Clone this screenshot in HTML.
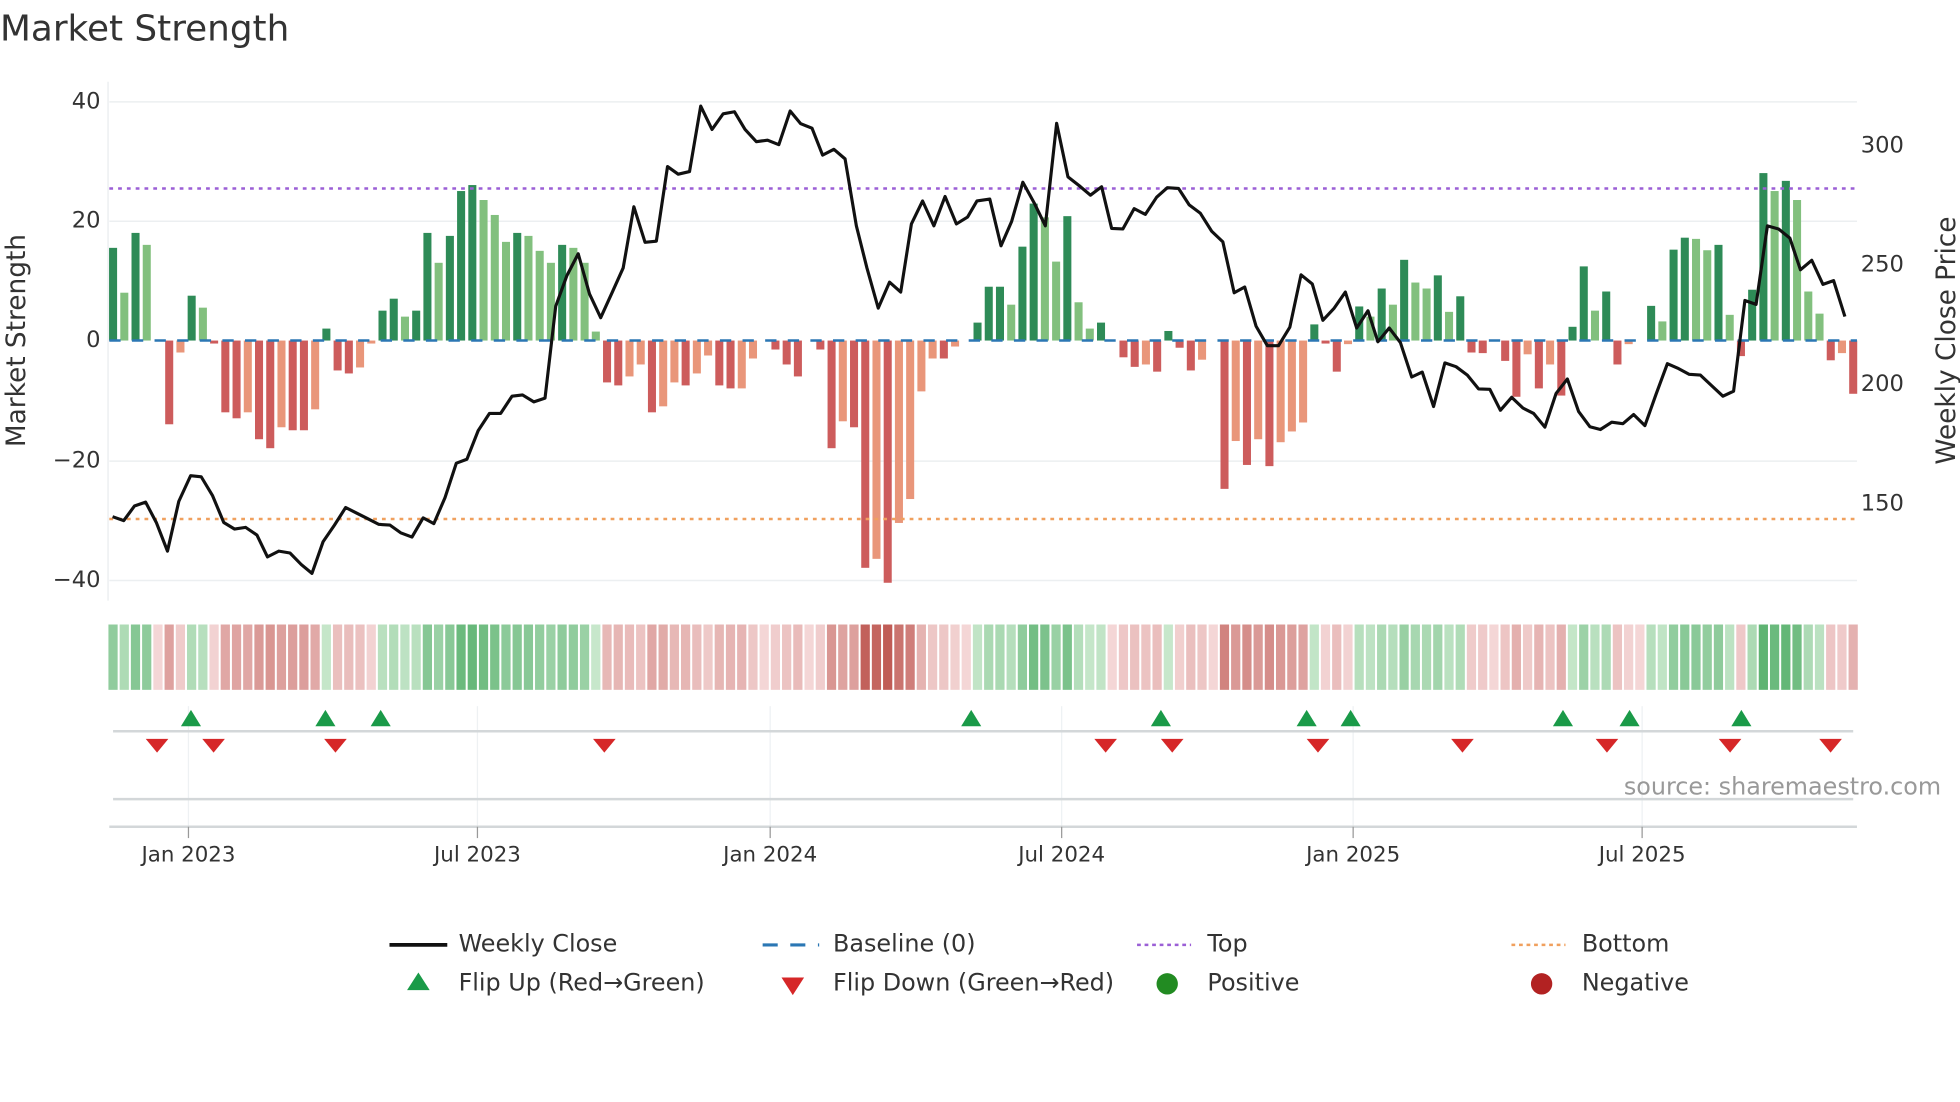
<!DOCTYPE html>
<html><head><meta charset="utf-8">
<style>
html,body{margin:0;padding:0;background:#fff;}
svg{display:block;font-family:"DejaVu Sans","Liberation Sans",sans-serif;}
</style></head>
<body>
<svg id="s" width="1960" height="1102" viewBox="0 0 1560 877" xmlns="http://www.w3.org/2000/svg">
<rect width="1560" height="877" fill="#fff"/>
<text x="0" y="32" font-size="28.5" fill="#333">Market Strength</text>
<g stroke="#eceff1" stroke-width="1.2">
<line x1="87" y1="81" x2="1478" y2="81"/>
<line x1="87" y1="176" x2="1478" y2="176"/>
<line x1="87" y1="367" x2="1478" y2="367"/>
<line x1="87" y1="462" x2="1478" y2="462"/>
<line x1="86" y1="65" x2="86" y2="478"/>
</g>
<g font-size="18" fill="#333" text-anchor="end" dominant-baseline="middle">
<text x="80" y="81">40</text><text x="80" y="176">20</text><text x="80" y="271">0</text>
<text x="80" y="367">−20</text><text x="80" y="462">−40</text>
</g>
<g font-size="18" fill="#333" dominant-baseline="middle">
<text x="1481" y="116">300</text><text x="1481" y="211">250</text><text x="1481" y="306">200</text><text x="1481" y="401">150</text>
</g>
<text transform="translate(20,271) rotate(-90)" font-size="21" fill="#333" text-anchor="middle">Market Strength</text>
<text transform="translate(1556,271) rotate(-90)" font-size="21" fill="#333" text-anchor="middle">Weekly Close Price</text>
<g id="bars"></g>
<line x1="87" y1="150" x2="1478" y2="150" stroke="#9b5fd6" stroke-width="2" stroke-dasharray="3,4"/>
<line x1="87" y1="413" x2="1478" y2="413" stroke="#f0a05e" stroke-width="2" stroke-dasharray="3,4"/>
<line x1="87" y1="271" x2="1478" y2="271" stroke="#2b77b4" stroke-width="2" stroke-dasharray="9,9"/>
<polyline id="pl" fill="none" stroke="#111" stroke-width="2.5" stroke-linejoin="round"/>
<g id="strip"></g>
<g stroke="#eef1f3" stroke-width="1">
<line x1="150" y1="562" x2="150" y2="658"/><line x1="380" y1="562" x2="380" y2="658"/>
<line x1="613" y1="562" x2="613" y2="658"/><line x1="845" y1="562" x2="845" y2="658"/>
<line x1="1077" y1="562" x2="1077" y2="658"/><line x1="1307" y1="562" x2="1307" y2="658"/>
</g>
<line x1="90" y1="582" x2="1475" y2="582" stroke="#d3d7d9" stroke-width="2"/>
<line x1="90" y1="636" x2="1475" y2="636" stroke="#d3d7d9" stroke-width="2"/>
<line x1="87" y1="658" x2="1478" y2="658" stroke="#d3d7d9" stroke-width="2"/>
<g stroke="#999" stroke-width="1">
<line x1="150" y1="658" x2="150" y2="667"/><line x1="380" y1="658" x2="380" y2="667"/>
<line x1="613" y1="658" x2="613" y2="667"/><line x1="845" y1="658" x2="845" y2="667"/>
<line x1="1077" y1="658" x2="1077" y2="667"/><line x1="1307" y1="658" x2="1307" y2="667"/>
</g>
<g id="mk"></g>
<g font-size="17" fill="#333" text-anchor="middle" dominant-baseline="middle">
<text x="150" y="681">Jan 2023</text><text x="380" y="681">Jul 2023</text><text x="613" y="681">Jan 2024</text>
<text x="845" y="681">Jul 2024</text><text x="1077" y="681">Jan 2025</text><text x="1307" y="681">Jul 2025</text>
</g>
<text x="1545" y="627" font-size="19" fill="#999" text-anchor="end" dominant-baseline="middle">source: sharemaestro.com</text>
<g font-size="19" fill="#333" dominant-baseline="middle">
<line x1="310" y1="752" x2="356" y2="752" stroke="#111" stroke-width="3"/>
<text x="365" y="752">Weekly Close</text>
<line x1="607" y1="752" x2="652" y2="752" stroke="#2b77b4" stroke-width="2.5" stroke-dasharray="12,10"/>
<text x="663" y="752">Baseline (0)</text>
<line x1="905" y1="752" x2="948" y2="752" stroke="#9b5fd6" stroke-width="2" stroke-dasharray="3,3"/>
<text x="961" y="752">Top</text>
<line x1="1203" y1="752" x2="1246" y2="752" stroke="#f0a05e" stroke-width="2" stroke-dasharray="3,3"/>
<text x="1259" y="752">Bottom</text>
<polygon points="324,788 342,788 333,774" fill="#1a9a48"/>
<text x="365" y="783">Flip Up (Red→Green)</text>
<polygon points="622,778 640,778 631,792" fill="#d62728"/>
<text x="663" y="783">Flip Down (Green→Red)</text>
<circle cx="929" cy="783" r="8.5" fill="#228b22"/>
<text x="961" y="783">Positive</text>
<circle cx="1227" cy="783" r="8.5" fill="#b22222"/>
<text x="1259" y="783">Negative</text>
</g>
</svg>
<script>
var V="15.5d,8l,18d,16l,0,-14d,-2l,7.5d,5.5l,-0.5d,-12d,-13d,-12l,-16.5d,-18d,-14.5l,-15d,-15d,-11.5l,2d,-5d,-5.5d,-4.5l,-0.5l,5d,7d,4l,5d,18d,13l,17.5d,25d,26d,23.5l,21l,16.5l,18d,17.5l,15l,13l,16d,15.5l,13l,1.5l,-7d,-7.5d,-6l,-4l,-12d,-11l,-7l,-7.5d,-5.5l,-2.5l,-7.5d,-8d,-8l,-3l,0,-1.5d,-4d,-6d,0,-1.5d,-18d,-13.5l,-14.5d,-38d,-36.5l,-40.5d,-30.5l,-26.5l,-8.5l,-3l,-3d,-1l,0,3d,9d,9d,6l,15.7d,22.9d,20.6l,13.2l,20.8d,6.4l,2l,3d,0,-2.8d,-4.4d,-4l,-5.2d,1.6d,-1.2d,-5d,-3.2l,0,-24.8d,-16.8l,-20.8d,-16.5l,-21d,-17l,-15.2l,-13.7l,2.7d,-0.5d,-5.2d,-0.6l,5.7d,4l,8.7d,6l,13.5d,9.7l,8.7l,10.9d,4.8l,7.4d,-2d,-2.1d,0,-3.4d,-9.4d,-2.3l,-8d,-4l,-9.2d,2.3d,12.4d,5l,8.2d,-4d,-0.6l,0,5.8d,3.2l,15.2d,17.2d,17l,15.1l,16d,4.3l,-2.6d,8.5d,28d,25l,26.7d,23.5l,8.2l,4.5l,-3.3d,-2.1l,-8.9d".split(",");
var NS="http://www.w3.org/2000/svg",n=V.length,sp=(1475-90)/(n-1),bars=document.getElementById("bars"),strip=document.getElementById("strip");
function el(p,t,a){var e=document.createElementNS(NS,t);for(var k in a)e.setAttribute(k,a[k]);p.appendChild(e);return e;}
function mix(a,b,t){return "rgb("+[0,1,2].map(function(i){return Math.round(a[i]+(b[i]-a[i])*t)}).join(",")+")";}
for(var i=0;i<n;i++){
 var s=V[i],v=parseFloat(s),k=s.slice(-1),x=90+sp*i;
 if(v!==0){
  var c=v>0?(k=="d"?"#2e8b57":"#82c07e"):(k=="d"?"#cd5c5c":"#e9967a");
  var y=271-v*4.76;
  el(bars,"rect",{x:x-3.2,y:Math.min(y,271),width:6.4,height:Math.abs(v*4.76),fill:c});
 }
 var col;
 if(v>0){var t=Math.min(v/28,1);col=mix([205,234,208],[95,180,115],t);}
 else{var t=Math.min(-v/40,1);col=mix([244,214,214],[192,92,86],Math.pow(t,0.8));}
 el(strip,"rect",{x:x-4.5+0.8,y:497,width:sp-1.6,height:52,fill:col});
}
var P1=[[180,1350],[198,1360],[215,1322],[233,1312],[250,1365],[268,1440],[286,1310],[305,1243],[322,1246],[340,1295],[358,1365],[375,1382],[393,1378],[411,1398],[428,1455],[446,1440],[464,1445],[482,1475],[499,1498],[517,1415],[535,1372],[553,1326],[570,1340],[588,1355],[606,1370],[624,1372],[641,1392],[659,1403],[677,1353],[694,1368],[712,1300],[730,1210],[747,1200],[765,1125],[783,1080],[801,1080],[819,1035],[836,1032],[854,1050],[872,1040],[889,800],[907,720],[925,663],[943,768],[961,830],[979,765],[997,700],[1014,540],[1032,633],[1050,630],[1068,435],[1085,455],[1103,448],[1121,277],[1139,338],[1157,297],[1175,292],[1192,338],[1210,370],[1228,366],[1246,378],[1264,290],[1281,323],[1299,335],[1316,405],[1334,390],[1352,415],[1370,590],[1387,700],[1405,805],[1423,737],[1441,763],[1458,585],[1476,525],[1494,590],[1512,513],[1530,585],[1548,567],[1563,525]];
var P2=[[15,520],[33,642],[50,578],[68,476],[86,530],[104,590],[122,322],[140,462],[158,485],[176,510],[194,488],[210,597],[228,598],[246,545],[264,560],[282,515],[299,490],[317,492],[334,535],[352,557],[370,604],[388,632],[406,765],[423,750],[441,852],[459,903],[477,903],[495,855],[513,718],[531,742],[548,837],[566,805],[584,763],[602,857],[620,812],[636,893],[654,857],[672,895],[690,985],[707,972],[725,1062],[743,948],[761,958],[779,980],[797,1016],[815,1017],[832,1072],[850,1038],[868,1066],[885,1080],[903,1116],[921,1028],[939,990],[957,1075],[975,1115],[992,1122],[1010,1103],[1028,1107],[1045,1083],[1063,1112],[1081,1030],[1099,950],[1117,963],[1134,978],[1152,980],[1170,1008],[1188,1035],[1205,1022],[1223,785],[1241,795],[1259,590],[1277,598],[1295,622],[1312,705],[1330,680],[1348,743],[1365,733],[1383,827]];
var YS=3.283;
var pts=P1.map(function(p){return (p[0]/2.01).toFixed(1)+","+(p[1]/YS).toFixed(1)}).concat(P2.map(function(p){return (780.3+p[0]/2.01).toFixed(1)+","+(p[1]/YS).toFixed(1)}));
document.getElementById("pl").setAttribute("points",pts.join(" "));
var mk=document.getElementById("mk");
[152,259,303,773,924,1040,1075,1244,1297,1386].forEach(function(x){el(mk,"polygon",{points:(x-8)+",578 "+(x+8)+",578 "+x+",565",fill:"#1a9a48"});});
[125,170,267,481,880,933,1049,1164,1279,1377,1457].forEach(function(x){el(mk,"polygon",{points:(x-9)+",588 "+(x+9)+",588 "+x+",599",fill:"#d62728"});});
</script>
</body></html>
